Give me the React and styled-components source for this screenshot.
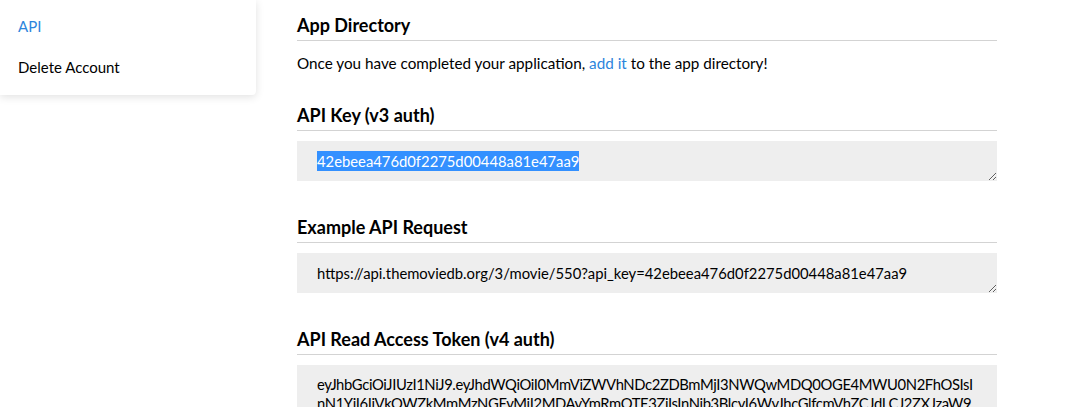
import React, { useEffect, useRef } from "react";
import styled, { createGlobalStyle } from "styled-components";

const GlobalStyle = createGlobalStyle`
  html, body {
    margin: 0;
    padding: 0;
    background: #fff;
    font-family: "Lato", "Liberation Sans", sans-serif;
    color: #000;
  }
`;

const apiKey = "42ebeea476d0f2275d00448a81e47aa9";
const token =
  "eyJhbGciOiJIUzI1NiJ9.eyJhdWQiOiI0MmViZWVhNDc2ZDBmMjI3NWQwMDQ0OGE4MWU0N2FhOSIsInN1YiI6IjVkOWZkMmMzNGEyMjI2MDAyYmRmOTE3ZiIsInNjb3BlcyI6WyJhcGlfcmVhZCJdLCJ2ZXJzaW9uIjoxfQ.Lh0Q3b0zV1c7fS2J6n8oNw2vX3a8dE5tRkYqP4uGmHs";

export default function App() {
  const keyRef = useRef(null);

  useEffect(() => {
    const el = keyRef.current;
    if (el) {
      el.focus();
      el.setSelectionRange(0, el.value.length);
    }
  }, []);

  return (
    <Page>
      <GlobalStyle />
      <Sidebar>
        <NavItem active>API</NavItem>
        <NavItem>Delete Account</NavItem>
      </Sidebar>
      <Main>
        <Section>
          <Heading>App Directory</Heading>
          <Text>
            Once you have completed your application, <Link href="#">add it</Link> to the
            app directory!
          </Text>
        </Section>
        <Section>
          <Heading>API Key (v3 auth)</Heading>
          <Field ref={keyRef} readOnly value={apiKey} />
        </Section>
        <Section>
          <Heading>Example API Request</Heading>
          <Field
            readOnly
            value={`https://api.themoviedb.org/3/movie/550?api_key=${apiKey}`}
          />
        </Section>
        <Section>
          <Heading>API Read Access Token (v4 auth)</Heading>
          <Field tall readOnly value={token} />
        </Section>
      </Main>
    </Page>
  );
}

const Page = styled.div`
  display: flex;
  align-items: flex-start;
  gap: 41px;
  height: 407px;
  overflow: hidden;
`;

const Sidebar = styled.nav`
  width: 256px;
  flex-shrink: 0;
  display: flex;
  flex-direction: column;
  padding: 6px 0 7px;
  background: #fff;
  box-shadow: 0 2px 8px rgba(0, 0, 0, 0.12);
  border-bottom-right-radius: 4px;
`;

const NavItem = styled.a`
  display: block;
  padding: 8px 18px;
  font-size: 15px;
  line-height: 25px;
  color: ${p => (p.active ? "#2c85dc" : "#000")};
  cursor: pointer;
`;

const Main = styled.main`
  width: 700px;
  padding-top: 13px;
`;

const Section = styled.section`
  display: flex;
  flex-direction: column;
  margin-bottom: 28px;
`;

const Heading = styled.h2`
  margin: 0 0 10px;
  padding-bottom: 3px;
  border-bottom: 1px solid #d3d3d3;
  font-size: 18px;
  line-height: 24px;
  font-weight: 700;
`;

const Text = styled.p`
  margin: 0;
  font-size: 15.25px;
  line-height: 24px;
`;

const Link = styled.a`
  color: #2c85dc;
  text-decoration: none;
`;

const Field = styled.textarea`
  display: block;
  box-sizing: border-box;
  width: 700px;
  height: ${p => (p.tall ? "90px" : "40px")};
  margin-bottom: 6px;
  padding: 10px 20px;
  border: none;
  border-radius: 0;
  outline: none;
  background: #eee;
  color: #000;
  font-family: "Lato", "Liberation Sans", sans-serif;
  font-size: 14.8px;
  line-height: ${p => (p.tall ? "19px" : "20px")};
  letter-spacing: ${p => (p.tall ? "-0.38px" : "0")};
  overflow: hidden;
  word-break: break-all;

  &::selection {
    background: #3390ff;
    color: #fff;
  }
`;
